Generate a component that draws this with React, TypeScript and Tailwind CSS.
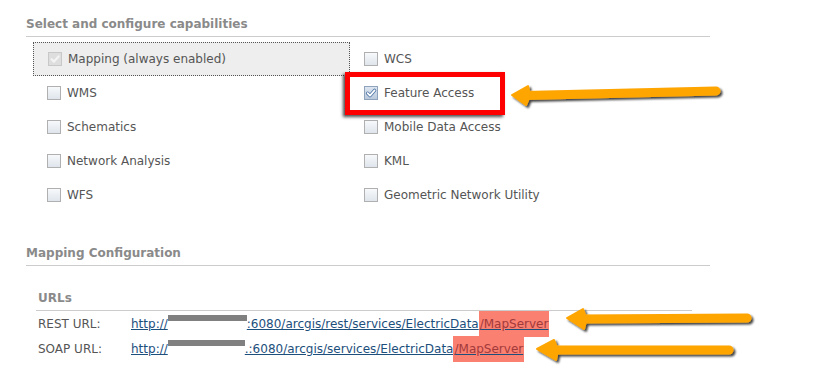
import React from "react";

const font = { fontFamily: '"DejaVu Sans", Verdana, sans-serif' };

function Box({ checked, disabled }: { checked?: boolean; disabled?: boolean }) {
  const border = disabled ? "border-[#c8c8c8]" : checked ? "border-[#8fa3bd]" : "border-[#b0b0b0]";
  const bg = disabled
    ? "bg-[#dedede]"
    : checked
    ? "bg-gradient-to-b from-[#dde6f0] to-[#b9c9dc]"
    : "bg-gradient-to-b from-[#f7f9fb] to-[#dfe5ec]";
  return (
    <span className={`inline-flex h-[14px] w-[14px] shrink-0 items-center justify-center border ${border} ${bg}`}>
      {checked && (
        <svg viewBox="0 0 12 12" className="h-[12px] w-[12px]">
          {!disabled && (
            <path
              d="M2.6 6.2 L5 8.6 L9.6 3.4"
              fill="none"
              stroke="#4f76a6"
              strokeWidth="3.4"
              strokeLinecap="round"
              strokeLinejoin="round"
            />
          )}
          <path
            d="M2.6 6.2 L5 8.6 L9.6 3.4"
            fill="none"
            stroke={disabled ? "#f4f4f4" : "#ffffff"}
            strokeWidth={disabled ? "2.2" : "1.7"}
            strokeLinecap="round"
            strokeLinejoin="round"
          />
        </svg>
      )}
    </span>
  );
}

function Item({ label, checked, disabled }: { label: string; checked?: boolean; disabled?: boolean }) {
  return (
    <div className="flex h-[34px] items-center gap-[6px] pl-[14px] text-[12px] text-[#555]">
      <Box checked={checked} disabled={disabled} />
      <span>{label}</span>
    </div>
  );
}

function Heading({ children }: { children: React.ReactNode }) {
  return <div className="border-b border-[#cccccc] pb-[3px] text-[12px] font-bold text-[#8a8a8a]">{children}</div>;
}

function Arrows() {
  const arrow = (tip: [number, number], top: [number, number], bot: [number, number], end: [number, number]) => {
    const sx = (top[0] + bot[0]) / 2;
    const sy = (top[1] + bot[1]) / 2;
    return (
      <g>
        <line x1={sx - 2} y1={sy} x2={end[0]} y2={end[1]} stroke="#ffa500" strokeWidth="9" strokeLinecap="round" />
        <polygon
          points={`${tip[0]},${tip[1]} ${top[0]},${top[1]} ${sx + 3},${sy} ${bot[0]},${bot[1]}`}
          fill="#ffa500"
          stroke="#ffa500"
          strokeWidth="2"
          strokeLinejoin="round"
        />
      </g>
    );
  };
  return (
    <svg className="pointer-events-none absolute left-0 top-0" width="816" height="380">
      <defs>
        <filter id="sh" x="-10%" y="-50%" width="120%" height="200%">
          <feDropShadow dx="2" dy="2" stdDeviation="1.2" floodColor="#000" floodOpacity="0.75" />
        </filter>
      </defs>
      <g filter="url(#sh)">
        {arrow([512, 95], [528, 86], [526, 105], [716, 91])}
        {arrow([567, 318], [583, 309], [584, 329], [747, 318])}
        {arrow([537, 349], [554, 340], [556, 360], [729, 350])}
      </g>
    </svg>
  );
}

function UrlRow({ label, rest, pad }: { label: string; rest: string; pad: string }) {
  return (
    <div className="flex h-[25px] items-center text-[12px]">
      <span className="w-[93px] text-[#555]">{label}</span>
      <span className="flex items-center text-[#1d4f7d] underline decoration-[#1d4f7d]">
        <span>http://</span>
        <span className={`relative ${pad} self-stretch`}>
          <span className="absolute left-0 right-0 top-[4px] h-[6px] bg-[#808080]" />
        </span>
        <span>{rest}</span>
        <span className="bg-[#fa8072] px-[1px] py-[4px] text-[#a33a3a]">/MapServer</span>
      </span>
    </div>
  );
}

export default function App() {
  return (
    <div className="relative h-[380px] w-[816px] bg-white" style={font}>
      <div className="box-content w-[684px] pl-[26px] pt-[15px]">
        <Heading>Select and configure capabilities</Heading>
        <div className="mt-[5px] grid grid-cols-[317px_317px] pl-[7px]">
          <div className="border border-dotted border-[#555] bg-[#eeeeee]">
            <div className="-my-px">
              <Item label="Mapping (always enabled)" checked disabled />
            </div>
          </div>
          <Item label="WCS" />
          <Item label="WMS" />
          <Item label="Feature Access" checked />
          <Item label="Schematics" />
          <Item label="Mobile Data Access" />
          <Item label="Network Analysis" />
          <Item label="KML" />
          <Item label="WFS" />
          <Item label="Geometric Network Utility" />
        </div>

        <div className="mt-[32px]">
          <Heading>Mapping Configuration</Heading>
        </div>

        <div className="ml-[10px] mt-[23px] w-[656px]">
          <div className="border-b border-[#cccccc] pb-[3px] pl-[2px] text-[12px] font-bold text-[#8a8a8a]">URLs</div>
          <div className="pl-[2px]">
            <UrlRow label="REST URL:" rest=":6080/arcgis/rest/services/ElectricData" pad="w-[79px]" />
            <UrlRow label="SOAP URL:" rest=".:6080/arcgis/services/ElectricData" pad="w-[77px]" />
          </div>
        </div>
      </div>

      {/* annotation: red highlight box */}
      <div className="pointer-events-none absolute left-[345px] top-[72px] h-[43px] w-[160px] border-[5px] border-[#ff0000] shadow-[-2px_2px_3px_rgba(0,0,0,0.7)]" />
      <Arrows />
    </div>
  );
}
